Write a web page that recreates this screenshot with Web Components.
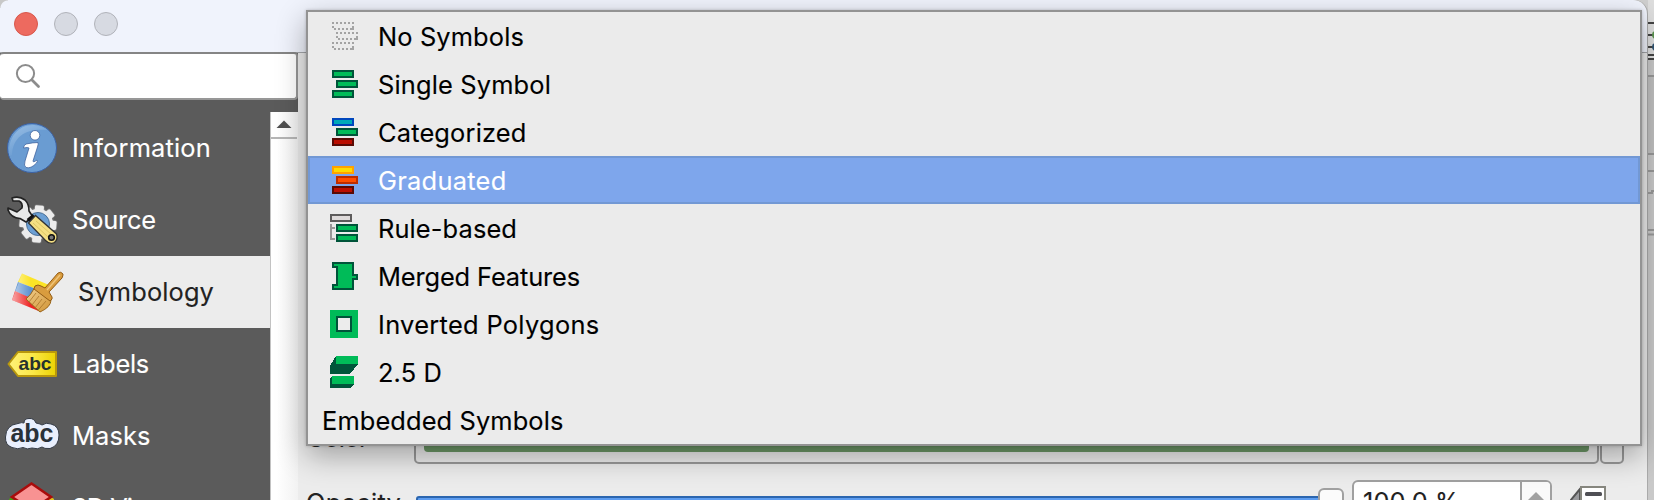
<!DOCTYPE html>
<html lang="en"><head><meta charset="utf-8"><title>Layer Properties</title>
<style>
html,body{margin:0;width:1654px;height:500px;overflow:hidden}
body{font-family:Inter,"Liberation Sans",sans-serif;font-size:25.4px;color:#000;background:#cfcfcf}
</style></head><body>
<app-window></app-window>
<script>
const define=(name,html,init)=>customElements.define(name,class extends HTMLElement{
  constructor(){super();this.attachShadow({mode:'open'}).innerHTML=html}
  connectedCallback(){if(init)init.call(this,this.shadowRoot)}
});

/* One line of text whose tracking is adjusted to fill the given width. */
customElements.define('fit-text',class extends HTMLElement{
  constructor(){super();this.attachShadow({mode:'open'}).innerHTML=`<style>:host{display:block;white-space:pre;line-height:30px;height:30px}span{display:inline-block;-webkit-text-stroke:.12px currentColor}</style><span><slot></slot></span>`}
  connectedCallback(){
    const s=this.shadowRoot.querySelector('span'),w=+this.getAttribute('w');
    if(w){const n=s.getBoundingClientRect().width;s.style.letterSpacing=((w-n)/this.textContent.length)+'px'}
  }
});

const bar=(x,y,s,f)=>`<rect x="${x+.5}" y="${y+.5}" width="10" height="3" fill="${f}" stroke="${s}"/>`;
const G=['#00543a','#00bb58'],R=['#5a0a04','#ba0d00'];
const dots=(x,y)=>{let o='';for(let i=0;i<11;i+=2)o+=`M${x+i} ${y}h1v1h-1zM${x+i+(i<10?1:0)} ${y+3}h1v1h-1z`;return o+`M${x} ${y+2}h1v1h-1zM${x+10} ${y+2}h1v1h-1z`};
const symbols={
 none:`<path fill="#a3a3a3" d="${dots(1,0)}${dots(3,5)}${dots(1,10)}"/>`,
 single:bar(1,0,...G)+bar(3,5,...G)+bar(1,10,...G),
 categorized:bar(1,0,'#0047bd','#00aab8')+bar(3,5,...G)+bar(1,10,...R),
 graduated:bar(1,0,'#ffa200','#ffdc00')+bar(3,5,'#bd2d00','#ff4d00')+bar(1,10,...R),
 rule:bar(0,0,'#5d5b5b','#dedada')+bar(3,5,...G)+bar(3,10,...G)+'<path d="M2.5 7H.5M.5 5V12.5H2.5" stroke="#989898" fill="none"/>',
 merged:'<path d="M1.5.5H11.5V6.5H13.5V8.5H11.5V13.5H1.5V11.5H3.5V2.5H1.5Z" fill="#00bb58" stroke="#00543a"/>',
 inverted:'<path d="M0 0H14V14H0Z" fill="#00bb58"/><path d="M3.5 3.5H10.5V10.5H3.5Z" fill="#ececec" stroke="#00543a"/>',
 extruded:'<path d="M3-1H14V3L10 8H0V4Z" fill="#00543a"/><path d="M3-1H14V3H3Z" fill="#00bb58"/><path d="M1 9H12V13L10.500 15H0V10.500Z" fill="#00543a"/><path d="M1 9H12V13H1Z" fill="#00bb58"/>'
};
define('menu-item',`<style>
:host{display:flex;box-sizing:border-box;height:48px;padding:10px 0 0 71px;color:#000}
:host([icon=""]){padding-left:14px}
:host([selected]){background:#7ea6ec;box-shadow:inset 0 0 0 2px #7298d4;color:#fff}
svg{flex:none;width:28px;height:28px;overflow:visible;margin:0 20px 0 -49px;display:block}
:host([icon=""]) svg{display:none}
</style><svg viewBox="0 0 14 14" shape-rendering="crispEdges"></svg><slot></slot>`,
function(r){r.querySelector('svg').innerHTML=symbols[this.getAttribute('icon')]||''});

define('popup-menu',`<style>
:host{display:block;box-sizing:border-box;width:1336px;height:436px;border:2px solid #939393;background:#ebebeb;box-shadow:0 10px 28px rgba(0,0,0,.32),0 0 3px rgba(0,0,0,.2)}
</style><slot></slot>`);

const gear=(()=>{let p='';for(let i=0;i<8;i++)p+=`<rect x="33.500" y="21.500" width="9" height="12" rx="1.500" transform="rotate(${i*45+5} 38 40)"/>`;return p})();
const pages={
 info:`<defs><linearGradient id="g" x1="0" y1="0" x2=".6" y2="1"><stop stop-color="#a6c8ea"/><stop offset="1" stop-color="#5f94cd"/></linearGradient></defs>
 <circle cx="32" cy="36" r="24.500" fill="#6a9cd2" stroke="#3c62a5"/>
 <path d="M9.500 44C7 26 18 12.500 34 13Q43 14 47 18C28 16 13 23 12 43Z" fill="url(#g)" opacity=".8"/>
 <g fill="#fff" stroke="#41659f" stroke-width=".8"><circle cx="35" cy="23.300" r="4.800"/><path d="M26 32Q33 30.500 38 30.500Q38.500 32 37.500 35L33 49Q33 51 37 48Q38 49 36.500 51Q31 57 26 55.500Q23.500 54 25 49L29 36Q28 35 23.500 36Q23.500 33.500 26 32Z"/></g>`,
 source:`<g fill="#ececec" stroke="#777" stroke-width="1.500">${gear}<circle cx="38" cy="40" r="15.500"/></g><g fill="#ececec">${gear}</g>
 <circle cx="38" cy="40" r="15" fill="#ececec"/><circle cx="38" cy="40" r="11.500" fill="#6b9fd4" stroke="#4e7196"/>
 <path d="M12 14Q19 11.500 25 16Q29 20 29 27L33 33L26 38L20 34.500Q11 34 8 26L8 24L17 28L22 24Q23 19 19 17L13 17Z" fill="#e8e9e9" stroke="#222" stroke-width="1.600" stroke-linejoin="round"/>
 <path d="M28 36.500L34 31.500" stroke="#111" stroke-width="4"/>
 <path d="M28.500 39L35.500 31.500L56.500 50Q58.500 55 54.500 58.500Q50 61 45.500 56.500Z" fill="#f4df83" stroke="#333" stroke-width="1.300"/><path d="M33 39L48 53M36 37L51 50" stroke="#dec764" stroke-width="1"/>
 <circle cx="51.500" cy="53.500" r="2.800" fill="#777" stroke="#111" stroke-width="1.600"/>`,
 symbology:`<defs><linearGradient id="f"><stop stop-color="#fff" stop-opacity=".6"/><stop offset=".5" stop-color="#fff" stop-opacity="0"/></linearGradient><linearGradient id="b" x1="0" y1="0" x2="1" y2="1"><stop stop-color="#f2cf8e"/><stop offset="1" stop-color="#d09436"/></linearGradient></defs>
 <path d="M22 17.500L49 29L44 36L18 26Z" fill="#fce426"/><path d="M18 26L44 36L39 47L15 35Z" fill="#5d91cf"/><path d="M15 35L42 47L41 56L12 44Z" fill="#ee2424"/>
 <path d="M22 17.500L49 29L41 56L12 44Z" fill="url(#f)"/>
 <path d="M35 31L51 44Q51 51 40 56L26 43Q31 39 35 31Z" fill="url(#b)" stroke="#9b671c"/>
 <path d="M29 46L36 37M32 49L39 40M35 52L42 43M38 54.500L46 45" stroke="#a8742a" stroke-width=".8"/>
 <path d="M35 30Q38 28 41 30L45 32L58 17Q61 15 63 18Q63 20 62 22L49 36L52 41Q53 43 50 45L34 33Z" fill="#d99c3e" stroke="#925b14"/><path d="M47 34L60 19" stroke="#efc57b" stroke-width="1.500"/>`,
 labels:`<defs><linearGradient id="y" x2="1"><stop stop-color="#fff17a"/><stop offset=".5" stop-color="#fbe94a"/><stop offset="1" stop-color="#ebd302"/></linearGradient></defs>
 <path d="M8.500 36L18 24H56V48H18Z" fill="url(#y)" stroke="#b9980c" stroke-width="2" stroke-linejoin="round"/><text x="18.500" y="41.800" font-size="19" textLength="33" lengthAdjust="spacingAndGlyphs" fill="#26312e">abc</text>`,
 masks:`<g fill="#e9effd" stroke="#343b46" stroke-width="1"><path d="M18 23.500Q22 22 24 23Q24 18.500 29 18.500Q34 18 36 23Q41 24 42 25Q46 22 51 24Q59 26 59 35Q59 46 50 48.500Q44 49 42 47Q38 50 32 48Q27 50 23 47.500Q18 50 12 47.500Q5 45 5.500 37Q6 25 18 23.500Z"/></g><text x="10.500" y="41.800" font-size="25" textLength="43" lengthAdjust="spacingAndGlyphs" fill="#293139">abc</text>`,
 view3d:`<path d="M9 27L20 20V40H9Z" fill="#4b9a18"/><path d="M54 27L43 20V40H54Z" fill="#dfc51d"/><path d="M31.500 11.500L51 25L31.500 38L12 25Z" fill="#f89292" stroke="#a90c0c" stroke-width="2.600"/>`
};
define('side-item',`<style>
:host{display:flex;height:72px;color:#fff;background:#5b5b5b}
:host([selected]){background:#ececec;color:#222}
svg{flex:none;width:72px;height:72px}
:host([selected]) svg{width:78px}
text{font-family:"Liberation Sans",sans-serif;font-weight:700}
div{padding-top:21px}
</style><svg></svg><div><slot></slot></div>`,
function(r){r.querySelector('svg').innerHTML=pages[this.getAttribute('icon')]});

define('title-bar',`<style>
:host{display:flex;box-sizing:border-box;height:53px;padding:12px 14px;gap:16px;background:#f0f3fc;border-bottom:1px solid #a5a7ab;border-top-right-radius:14px}
i{box-sizing:border-box;width:24px;height:24px;border-radius:50%;background:#d7dae2;border:1px solid #b1b3ba}
.close{background:#ed6a5f;border-color:#d8574c}
</style><i class="close"></i><i></i><i></i>`);
define('search-field',`<style>
:host{display:block;box-sizing:border-box;width:298px;height:48px;background:#fff;border:2px solid #979797;border-top-color:#858585;border-left:0;border-radius:4px}
svg{display:block;width:60px;height:42px}
</style><svg viewBox="0 54 60 42"><circle cx="25.500" cy="73.500" r="8.600" fill="none" stroke="#8c8c8c" stroke-width="2"/><path d="M32 80L38.500 86.500" stroke="#8c8c8c" stroke-width="2.800" stroke-linecap="round"/></svg>`);
define('scroll-strip',`<style>
:host{display:block;box-sizing:border-box;width:28px;background:linear-gradient(90deg,#fff 20%,#f2f2f2);border-left:1px solid #c2c2c2}
div{box-sizing:border-box;width:26px;height:27px;border-bottom:2px solid #b5b5b5}
svg{display:block}
</style><div><svg width="26" height="25"><path d="M5.500 16L13 8.500L20.500 16Z" fill="#505050"/></svg></div>`);
define('side-panel',`<style>
:host{display:flex;flex-direction:column;width:298px;background:#5b5b5b}
search-field{margin-top:-1px}
section{display:flex;margin-top:12px;height:388px;overflow:hidden}
nav{width:270px}
</style><search-field></search-field><section><nav>
<side-item icon="info"><fit-text w="139">Information</fit-text></side-item>
<side-item icon="source"><fit-text w="84">Source</fit-text></side-item>
<side-item icon="symbology" selected><fit-text w="136">Symbology</fit-text></side-item>
<side-item icon="labels"><fit-text w="77">Labels</fit-text></side-item>
<side-item icon="masks"><fit-text w="78.500">Masks</fit-text></side-item>
<side-item icon="view3d"><fit-text w="93">3D View</fit-text></side-item>
</nav><scroll-strip></scroll-strip></section>`);
define('symbol-form',`<style>
:host{display:flex;flex-direction:column;flex:1;background:#ececec;padding:367px 0 0 8px;color:#222;overflow:hidden}
.row{display:flex;align-items:flex-start;flex:none}
.color{height:60px}
.opacity{height:44px}
.color fit-text{margin-top:3px}.opacity fit-text{margin-top:8px}
.label{width:108px;flex:none}
.well{box-sizing:border-box;width:1185px;height:44px;border:2px solid #999;border-radius:5px;padding:0 8px 10px}
.well b{display:block;height:30px;background:#6c9766;border-radius:4px}
.more{box-sizing:border-box;width:24px;height:44px;margin-left:1px;border:2px solid #999;border-radius:5px;background:#eee}
.track{display:flex;box-sizing:border-box;width:904px;height:10px;margin:16px 0 0 2px;background:#5c9cf0;border:2px solid #2b66af;border-radius:3px 0 0 3px}
.knob{box-sizing:border-box;width:26px;height:26px;margin:8px 8px 0 -2px;border:2px solid #a0a0a0;border-radius:6px;background:#fbfbfb;z-index:1}
.spin{display:flex;box-sizing:border-box;width:200px;height:44px;border:2px solid #a0a0a0;border-radius:6px;background:#fff;overflow:hidden}
.spin fit-text{width:159px;margin-left:9px;margin-top:5px}
.spin svg{border-left:2px solid #a0a0a0;width:28px;height:42px;display:block;background:#fafafa;flex:none}
.override{display:block;width:40px;height:40px;margin-left:18px}
</style>
<div class="row color"><div class="label"><fit-text w="62">Color</fit-text></div><div class="well"><b></b></div><div class="more"></div></div>
<div class="row opacity"><div class="label"><fit-text w="95">Opacity</fit-text></div><div class="track"></div><div class="knob"></div>
<div class="spin"><fit-text w="97">100.0 %</fit-text><svg><path d="M6 18L14 10L22 18Z" fill="#a1a1a1"/></svg></div>
<svg class="override"><path d="M10 9L0 21L10 33Z" fill="#999a9d" stroke="#555" stroke-width="2"/><rect x="11" y="7" width="24" height="30" fill="#fff" stroke="#87877f" stroke-width="2"/><rect x="15" y="12" width="17" height="4" rx="1.500" fill="#505055"/></svg></div>`);
define('app-window',`<style>
:host{display:flex;height:500px;overflow:hidden;position:relative}
main{width:1648px;display:flex;flex-direction:column;border-top-right-radius:14px;overflow:hidden;box-sizing:border-box;border-right:1px solid #aaa}
.body{display:flex;height:447px}
aside{width:6px}
aside svg{display:block}
popup-menu{position:absolute;left:306px;top:10px}
.shade{position:absolute;left:0;top:0;width:8px;height:8px;background:radial-gradient(circle at 8px 8px,transparent 7px,#c8c8c8 8px)}
</style>
<main><title-bar></title-bar><div class="body"><side-panel></side-panel><symbol-form></symbol-form></div></main>
<aside><svg width="6" height="500"><path d="M0 0H6V60H0Z" fill="#dedede"/><path d="M0 60H6V500H0Z" fill="#c9c9c9"/><path d="M0 77H6V153H0Z" fill="#c0c0c0"/><path d="M0 23H6M0 35H6M0 47H6M0 55H6M0 59H6" stroke="#444" stroke-width="2"/><circle cx="8" cy="35" r="4" fill="#5b9450"/><circle cx="8" cy="47" r="4" fill="#315573"/><path d="M0 76H6M0 154H6M0 171H6M0 193H4V191H6M0 230H6M0 234.500H6" stroke="#999" stroke-width="2" fill="none"/></svg></aside>
<div class="shade"></div>
<popup-menu>
<menu-item icon="none"><fit-text w="146">No Symbols</fit-text></menu-item>
<menu-item icon="single"><fit-text w="173">Single Symbol</fit-text></menu-item>
<menu-item icon="categorized"><fit-text w="148.500">Categorized</fit-text></menu-item>
<menu-item icon="graduated" selected><fit-text w="128.500">Graduated</fit-text></menu-item>
<menu-item icon="rule"><fit-text w="139">Rule-based</fit-text></menu-item>
<menu-item icon="merged"><fit-text w="202">Merged Features</fit-text></menu-item>
<menu-item icon="inverted"><fit-text w="221.500">Inverted Polygons</fit-text></menu-item>
<menu-item icon="extruded"><fit-text w="64">2.5 D</fit-text></menu-item>
<menu-item icon=""><fit-text w="241.500">Embedded Symbols</fit-text></menu-item>
</popup-menu>`);
</script></body></html>
